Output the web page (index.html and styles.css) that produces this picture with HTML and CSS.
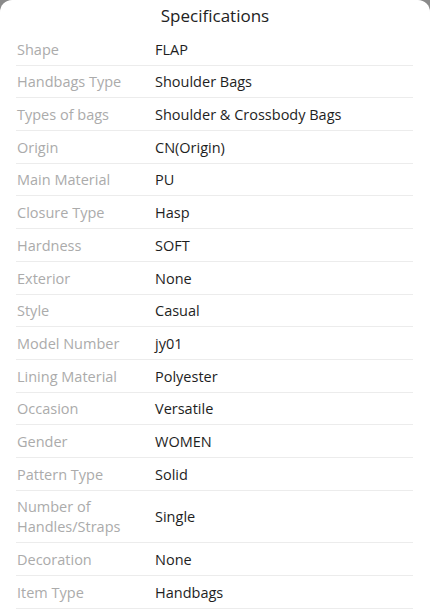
FILE: index.html
```html
<!DOCTYPE html>
<html>
<head>
<meta charset="utf-8">
<link rel="stylesheet" href="styles.css">
</head>
<body>
<div class="sheet">
  <div class="title">Specifications</div>
  <div class="list">
    <div class="row"><div class="label">Shape</div><div class="value">FLAP</div></div>
    <div class="row"><div class="label">Handbags Type</div><div class="value">Shoulder Bags</div></div>
    <div class="row"><div class="label">Types of bags</div><div class="value">Shoulder &amp; Crossbody Bags</div></div>
    <div class="row"><div class="label">Origin</div><div class="value">CN(Origin)</div></div>
    <div class="row"><div class="label">Main Material</div><div class="value">PU</div></div>
    <div class="row"><div class="label">Closure Type</div><div class="value">Hasp</div></div>
    <div class="row"><div class="label">Hardness</div><div class="value">SOFT</div></div>
    <div class="row"><div class="label">Exterior</div><div class="value">None</div></div>
    <div class="row"><div class="label">Style</div><div class="value">Casual</div></div>
    <div class="row"><div class="label">Model Number</div><div class="value">jy01</div></div>
    <div class="row"><div class="label">Lining Material</div><div class="value">Polyester</div></div>
    <div class="row"><div class="label">Occasion</div><div class="value">Versatile</div></div>
    <div class="row"><div class="label">Gender</div><div class="value">WOMEN</div></div>
    <div class="row"><div class="label">Pattern Type</div><div class="value">Solid</div></div>
    <div class="row"><div class="label">Number of Handles/Straps</div><div class="value">Single</div></div>
    <div class="row"><div class="label">Decoration</div><div class="value">None</div></div>
    <div class="row"><div class="label">Item Type</div><div class="value">Handbags</div></div>
  </div>
</div>
</body>
</html>
```
FILE: styles.css
```css
html, body {
  margin: 0;
  padding: 0;
  background: #8a8a8a;
}
body {
  font-family: "Open Sans", "Noto Sans", sans-serif;
}
.sheet {
  background: #fff;
  border-radius: 12px 12px 0 0;
  height: 610px;
  overflow: hidden;
}
.title {
  height: 33px;
  line-height: 32px;
  text-align: center;
  font-size: 17px;
  color: #222;
}
.list {
  padding: 0 17px 0 16px;
}
.row {
  display: flex;
  align-items: center;
  padding: 6.7px 0 5px;
  border-bottom: 1px solid #ececec;
  font-size: 14.5px;
  line-height: 20px;
}
.label {
  width: 128px;
  padding-left: 1px;
  margin-right: 10px;
  color: #ababab;
  flex: none;
}
.value {
  color: #1e1e1e;
}
```
